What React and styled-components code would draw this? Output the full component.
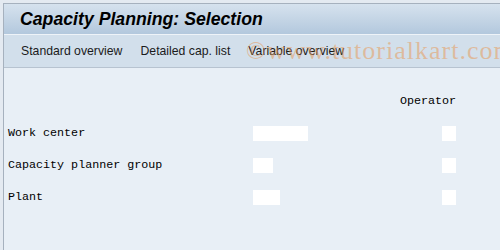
import React from 'react';
import styled, { createGlobalStyle } from 'styled-components';

const GlobalStyle = createGlobalStyle`
  html, body {
    margin: 0;
    padding: 0;
    background: #e9eef4;
  }
  body {
    font-family: "Liberation Sans", Arial, sans-serif;
  }
`;

const Frame = styled.div`
  width: 500px;
  height: 250px;
  padding: 3px 0 0 3px;
  box-sizing: border-box;
  background: #e4eaf1;
  overflow: hidden;
`;

const Window = styled.div`
  position: relative;
  height: 100%;
  border-left: 1px solid #a6b1be;
  border-top: 1px solid #a6b1be;
  background: #e8eff6;
  display: flex;
  flex-direction: column;
`;

const TitleBar = styled.div`
  height: 30px;
  display: flex;
  align-items: center;
  padding-left: 16px;
  background: linear-gradient(#d6e2ee, #b3c8dd);
  border-bottom: 1px solid #eef3f8;
`;

const Title = styled.h1`
  margin: 0;
  font-family: "Liberation Sans", Arial, sans-serif;
  font-size: 17.7px;
  font-weight: 700;
  font-style: italic;
  color: #000;
`;

const Toolbar = styled.div`
  height: 32px;
  display: flex;
  align-items: center;
  gap: 18px;
  padding-left: 17px;
  background: #d2dfeb;
  border-bottom: 1px solid #b7c3d0;
`;

const ToolButton = styled.span`
  font-family: "Liberation Sans", Arial, sans-serif;
  font-size: 12.25px;
  color: #1b1b1b;
`;

const Watermark = styled.div`
  position: absolute;
  left: 242px;
  top: 34px;
  font-family: "Liberation Serif", "Times New Roman", serif;
  font-size: 26px;
  line-height: 1;
  letter-spacing: 1px;
  color: rgba(232, 150, 80, 0.5);
  white-space: nowrap;
  pointer-events: none;
`;

const Content = styled.div`
  flex: 1;
  padding: 17px 44px 0 4px;
  display: flex;
  flex-direction: column;
`;

const Row = styled.div`
  height: 32px;
  display: flex;
  align-items: center;
`;

const Label = styled.span`
  width: 245px;
  font-family: "Liberation Mono", "Courier New", monospace;
  font-size: 11.7px;
  color: #000;
`;

const FieldCell = styled.div`
  flex: 1;
  display: flex;
  align-items: center;
`;

const Field = styled.div`
  width: ${({ $w }) => $w}px;
  height: 15px;
  background: #fff;
`;

const OperatorCell = styled.div`
  width: 60px;
  display: flex;
  justify-content: flex-end;
  font-family: "Liberation Mono", "Courier New", monospace;
  font-size: 11.7px;
  color: #000;
`;

const Check = styled.div`
  width: 14px;
  height: 15px;
  background: #fff;
`;

const rows = [
  { label: 'Work center', w: 55 },
  { label: 'Capacity planner group', w: 20 },
  { label: 'Plant', w: 27 },
];

export default function App() {
  return (
    <>
      <GlobalStyle />
      <Frame>
        <Window>
          <TitleBar>
            <Title>Capacity Planning: Selection</Title>
          </TitleBar>
          <Toolbar>
            <ToolButton>Standard overview</ToolButton>
            <ToolButton>Detailed cap. list</ToolButton>
            <ToolButton>Variable overview</ToolButton>
          </Toolbar>
          <Watermark>©www.tutorialkart.com</Watermark>
          <Content>
            <Row>
              <Label />
              <FieldCell />
              <OperatorCell>Operator</OperatorCell>
            </Row>
            {rows.map((r) => (
              <Row key={r.label}>
                <Label>{r.label}</Label>
                <FieldCell>
                  <Field $w={r.w} />
                </FieldCell>
                <OperatorCell>
                  <Check />
                </OperatorCell>
              </Row>
            ))}
          </Content>
        </Window>
      </Frame>
    </>
  );
}
